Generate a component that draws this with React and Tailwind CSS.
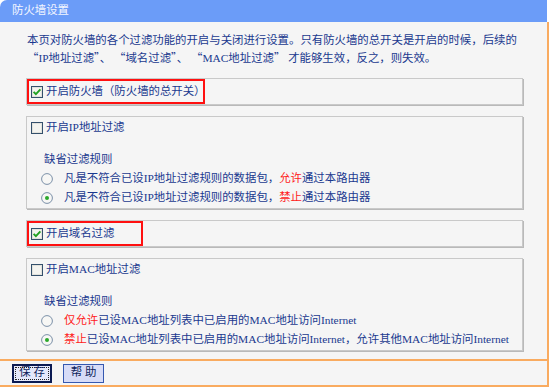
import React from 'react';

const CheckBox = ({ checked }) => (
  <svg width="12" height="12" viewBox="0 0 12 12" className="shrink-0">
    <rect x="0.5" y="0.5" width="11" height="11" fill="#f4f4f0" stroke="#34506c" />
    <rect x="1.5" y="1.5" width="9" height="9" fill="none" stroke="#e2e2dc" />
    {checked && (
      <path d="M2.6 5.8 L4.9 8.2 L9.4 3.4" fill="none" stroke="#21a121" strokeWidth="1.9" />
    )}
  </svg>
);

const Radio = ({ checked }) => (
  <svg width="12" height="12" viewBox="0 0 12 12" className="shrink-0">
    <circle cx="6" cy="6" r="5.4" fill="#f7f7f5" stroke="#7b90a8" />
    {checked && <circle cx="6" cy="6" r="2" fill="#2aa82a" />}
  </svg>
);

const boxClass =
  'w-[497px] border border-[#c9c9c9] shadow-[1px_1px_0_#b9b9b9] bg-[#f5f5f5]';

const FilterBox = ({ label, rules }) => (
  <div className={`${boxClass} mt-[11px] h-[93px] flex flex-col`}>
    <div className="h-[21px] pl-[4px] flex items-center gap-[3px] whitespace-nowrap">
      <CheckBox checked={false} />
      <span>{label}</span>
    </div>
    <div className="mt-[12px] h-[19px] pl-[17px] flex items-center">缺省过滤规则</div>
    {rules.map((rule, i) => (
      <div key={i} className="h-[19px] pl-[14px] flex items-center gap-[11px] whitespace-nowrap">
        <Radio checked={i === 1} />
        <span>{rule}</span>
      </div>
    ))}
  </div>
);

const HighlightBox = ({ label, width, top }) => (
  <div className={`${boxClass} ${top} h-[27px]`}>
    <div
      className={`${width} h-[25px] border-2 border-[#ff1010] pl-[2px] flex items-center gap-[3px] whitespace-nowrap overflow-visible`}
    >
      <CheckBox checked />
      <span>{label}</span>
    </div>
  </div>
);

const Red = ({ children }) => <span className="text-[#ff1a1a]">{children}</span>;

// full-width quotes come from the CJK font
const Q = ({ children }) => (
  <span className="font-['Noto_Sans_CJK_SC',sans-serif]">{children}</span>
);

export default function App() {
  return (
    <div className="w-[553px] h-[389px] bg-white font-['Liberation_Serif','Noto_Sans_CJK_SC',serif] text-[11.4px] text-[#1a398f] leading-none">
      <div className="w-[549px]">
        <div className="w-[547px] h-[22px] bg-[#6b9cf8] rounded-tl-[7px] pl-[12px] flex items-center text-[#f3f6ff]">
          防火墙设置
        </div>

        <div className="bg-[#f5f5f5] border-r-2 border-b-2 border-[#f9ab60]">
          <div className="h-[337px] pl-[26px] pt-[10px]">
            <div className="pl-[1px] leading-[17px] w-[500px]">
              <div className="whitespace-nowrap">
                本页对防火墙的各个过滤功能的开启与关闭进行设置。只有防火墙的总开关是开启的时候，后续的
              </div>
              <div className="whitespace-nowrap">
                <Q>“</Q>IP地址过滤<Q>”</Q>、 <Q>“</Q>域名过滤<Q>”</Q>、 <Q>“</Q>MAC地址过滤<Q>”</Q> 才能够生效，反之，则失效。
              </div>
            </div>

            <HighlightBox label="开启防火墙（防火墙的总开关）" width="w-[178px]" top="mt-[11px]" />

            <FilterBox
              label="开启IP地址过滤"
              rules={[
                <>凡是不符合已设IP地址过滤规则的数据包，<Red>允许</Red>通过本路由器</>,
                <>凡是不符合已设IP地址过滤规则的数据包，<Red>禁止</Red>通过本路由器</>,
              ]}
            />

            <HighlightBox label="开启域名过滤" width="w-[116px]" top="mt-[11px]" />

            <FilterBox
              label="开启MAC地址过滤"
              rules={[
                <><Red>仅允许</Red>已设MAC地址列表中已启用的MAC地址访问Internet</>,
                <><Red>禁止</Red>已设MAC地址列表中已启用的MAC地址访问Internet，允许其他MAC地址访问Internet</>,
              ]}
            />
          </div>

          <div className="h-[2px] bg-[#f9ab60]" />

          <div className="h-[24px] pl-[12px] flex items-center gap-[11px] text-[#0f1f5c]">
            <button className="w-[40px] h-[19px] border-2 border-[#0b1a52] bg-[#e4e8fb] flex items-center justify-center p-[1px]">
              <span className="w-full h-full border border-dotted border-[#222] flex items-center justify-center">
                保 存
              </span>
            </button>
            <button className="w-[41px] h-[19px] border border-[#3558b0] bg-[#d7dcf7] flex items-center justify-center">
              帮 助
            </button>
          </div>
        </div>
      </div>
    </div>
  );
}
